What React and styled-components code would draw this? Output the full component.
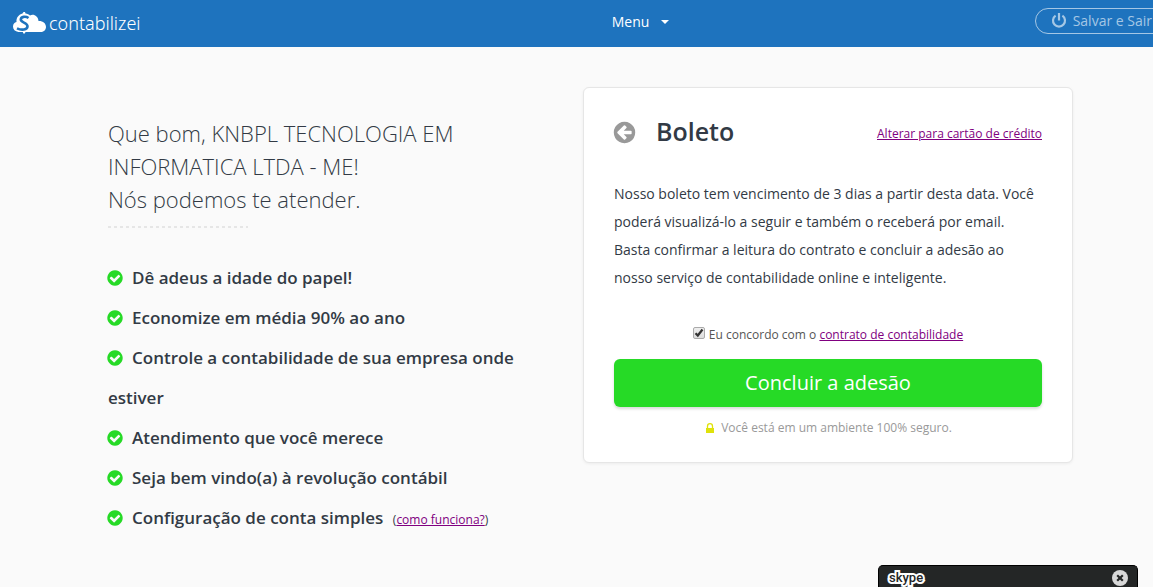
import React from "react";
import styled, { createGlobalStyle } from "styled-components";

const GlobalStyle = createGlobalStyle`
  * { box-sizing: border-box; }
  body {
    margin: 0;
    background: #fafafa;
    color: #323a45;
    font-family: "Open Sans", "Liberation Sans", sans-serif;
    font-size: 14px;
    overflow-x: hidden;
  }
  button { font-family: inherit; cursor: pointer; }
`;

const Header = styled.header`
  display: grid;
  grid-template-columns: 31fr auto 25fr;
  align-items: center;
  height: 47px;
  padding: 0 0 5px 12px;
  overflow: hidden;
  background: #1e73be;
  color: #fff;
`;

const Logo = styled.a`
  display: flex;
  align-items: center;
  gap: 3px;
  padding-top: 4px;
  color: #fff;
  text-decoration: none;
  font-family: "Noto Sans", "Open Sans", sans-serif;
  font-size: 18px;
  font-weight: 300;
  line-height: 24px;
`;

const MenuButton = styled.button`
  display: flex;
  align-items: center;
  gap: 12px;
  padding: 2px 0 0;
  border: 0;
  background: none;
  color: #fff;
  font-size: 14px;
  line-height: 20px;
`;

const Caret = styled.span`
  border: 4px solid transparent;
  border-top-color: #fff;
  border-bottom: 0;
`;

const ExitButton = styled.button`
  display: flex;
  align-items: center;
  justify-self: end;
  gap: 6px;
  height: 26px;
  margin-right: -16px;
  padding: 0 16px 0 15px;
  border: 1px solid #a5c7e5;
  border-radius: 13px;
  background: none;
  color: #a5c7e5;
  font-size: 14px;
  line-height: 20px;
  white-space: nowrap;
`;

const Main = styled.main`
  display: grid;
  grid-template-columns: minmax(0, 475fr) minmax(0, 490fr);
  align-items: start;
  padding: 40px 80px 48px 108px;
`;

const Intro = styled.section`
  padding: 30px 44px 0 0;
`;

const Greeting = styled.h1`
  margin: 0;
  font-size: 22px;
  font-weight: 300;
  line-height: 33px;
`;

const Divider = styled.hr`
  width: 140px;
  height: 2px;
  margin: 10px 0 30px;
  border: 0;
  background: repeating-linear-gradient(90deg, #e6e6e6 0 3px, transparent 3px 6px);
`;

const Benefits = styled.ul`
  margin: 0;
  padding: 0;
  list-style: none;
  font-size: 17px;
  font-weight: 600;
  line-height: 40px;
`;

const CheckMark = styled.svg`
  width: 18px;
  height: 18px;
  margin: 0 8px 0 -2px;
  vertical-align: -3px;
  fill: #26da26;
`;

const Small = styled.small`
  margin-left: 5px;
  font-size: 12px;
  font-weight: 400;
`;

const Link = styled.a`
  color: #800080;
  font-size: 12px;
  text-decoration: underline;
`;

const Card = styled.section`
  padding: 28px 30px 24px;
  border: 1px solid #e6e6e6;
  border-radius: 6px;
  background: #fff;
  box-shadow: 0 1px 3px rgba(0, 0, 0, 0.06);
`;

const CardHeader = styled.header`
  display: flex;
  align-items: center;
  height: 32px;
`;

const BackButton = styled.button`
  display: flex;
  margin: 0 19px 0 -2px;
  padding: 0;
  border: 0;
  background: none;
  color: #999;
`;

const Title = styled.h2`
  flex: 1;
  margin: 0;
  padding-bottom: 2px;
  font-size: 25px;
  font-weight: 600;
  line-height: 32px;
`;

const SwitchMethod = styled.p`
  margin: 0;
  padding-top: 4px;
  font-size: 12px;
  line-height: 16px;
`;

const Description = styled.p`
  margin: 32px 0 33px;
  font-size: 14px;
  line-height: 28px;
`;

const Agreement = styled.div`
  display: flex;
  align-items: center;
  justify-content: center;
  gap: 4px;
  color: #555;
  font-size: 12px;
  line-height: 20px;
`;

const TickBox = styled.span`
  position: relative;
  display: flex;
  margin-bottom: 4px;
`;

const Checkbox = styled.input`
  appearance: none;
  width: 12px;
  height: 12px;
  margin: 0;
  border: 1px solid #aaa;
  border-radius: 2px;
  background: linear-gradient(#eee, #ddd);

  & + svg {
    position: absolute;
    inset: 0;
    visibility: hidden;
    pointer-events: none;
  }
  &:checked + svg { visibility: visible; }
`;

const SubmitButton = styled.button`
  display: block;
  width: 100%;
  height: 48px;
  margin: 14px 0 11px;
  padding: 0 0 2px;
  border: 0;
  border-radius: 6px;
  background: #26da26;
  box-shadow: 0 2px 3px rgba(0, 0, 0, 0.15);
  color: #fff;
  font-size: 20px;
`;

const Security = styled.p`
  display: flex;
  align-items: center;
  justify-content: center;
  gap: 6px;
  margin: 0;
  color: #999;
  font-size: 12px;
  line-height: 20px;
`;

const SkypeBar = styled.aside`
  position: fixed;
  right: 15px;
  bottom: 0;
  display: flex;
  align-items: center;
  justify-content: space-between;
  width: 260px;
  height: 22px;
  padding: 2px 9px 0 10px;
  border: 1px solid #000;
  border-bottom: 0;
  border-radius: 5px 5px 0 0;
  background: #242626;
`;

const SkypeName = styled.span`
  color: #242626;
  font-family: Roboto, "Liberation Sans", sans-serif;
  font-size: 13px;
  font-weight: 500;
  line-height: 18px;
  -webkit-text-stroke: 4px #fff;
  paint-order: stroke fill;
`;

const CloseButton = styled.button`
  display: flex;
  padding: 0;
  border: 0;
  background: none;
`;

const CIRCLE =
  "M1664 896q0 209-103 385.5t-279.5 279.5-385.5 103-385.5-103-279.5-279.5-103-385.5 103-385.5 279.5-279.5 385.5-103 385.5 103 279.5 279.5 103 385.5z";

const CheckIcon = () => (
  <CheckMark viewBox="0 0 1792 1792" aria-hidden="true">
    <path
      fillRule="evenodd"
      d={"M1412 734q0-28-18-46l-91-90q-19-19-45-19t-45 19l-408 407-226-226q-19-19-45-19t-45 19l-91 90q-18 18-18 46 0 27 18 45l362 362q19 19 45 19 27 0 46-19l543-543q18-18 18-45z" + CIRCLE}
    />
  </CheckMark>
);

const BackIcon = () => (
  <svg width="25" height="25" viewBox="0 0 1792 1792" fill="currentColor" aria-hidden="true">
    <path
      fillRule="evenodd"
      d={"M1408 960v-128q0-26-19-45t-45-19h-502l189-189q19-19 19-45t-19-45l-91-91q-18-18-45-18t-45 18l-362 362-91 91q-18 18-18 45t18 45l91 91 362 362q18 18 45 18t45-18l91-91q18-18 18-45t-18-45l-189-189h502q26 0 45-19t19-45z" + CIRCLE}
    />
  </svg>
);

const PowerIcon = () => (
  <svg width="16" height="16" viewBox="0 0 16 16" fill="none" stroke="currentColor" strokeWidth="2.2" aria-hidden="true">
    <path d="M4.600 2.600A6 6 0 1 0 11.400 2.600" />
    <path d="M8 0v7.500" />
  </svg>
);

const LockIcon = () => (
  <svg width="11" height="13" viewBox="0 0 11 13" aria-hidden="true">
    <rect x="2" y="6" width="8" height="5" fill="#dfe20b" />
    <path d="M3.500 6V4.200a2.500 2.500 0 0 1 5 0V6" fill="none" stroke="#dfe20b" strokeWidth="1.300" />
  </svg>
);

const CloudLogo = () => (
  <svg width="34" height="24" viewBox="0 0 34 24" aria-hidden="true">
    <path
      fill="#fff"
      d="M6.500 21C3 20.500 1 18.500 1 15.500C1 13 2.500 11.500 4.500 11C4 6.500 7 3.500 10.500 2.500L11.500 1L13 1L13.500 2.500C15.500 2.700 17 3.500 18 4.500C21.500 2.500 26 5 26.500 10C31 9.800 34 12.500 34 16C34 19 31.500 21 28.500 21H13.500L12.800 22.500H11.300L10.800 21Z"
    />
    <path
      fill="none"
      stroke="#1e73be"
      strokeWidth="2.600"
      d="M16.500 7C14 5.200 8.800 5.300 8.800 8.600C8.800 12 15.500 11.300 15.500 15.300C15.500 19 9.500 19.500 5 17.300"
    />
  </svg>
);

const benefits = [
  "Dê adeus a idade do papel!",
  "Economize em média 90% ao ano",
  "Controle a contabilidade de sua empresa onde estiver",
  "Atendimento que você merece",
  "Seja bem vindo(a) à revolução contábil",
];

export default function App() {
  return (
    <>
      <GlobalStyle />
      <Header>
        <Logo href="#inicio">
          <CloudLogo />
          contabilizei
        </Logo>
        <MenuButton type="button">
          Menu <Caret />
        </MenuButton>
        <ExitButton type="button">
          <PowerIcon />
          Salvar e Sair
        </ExitButton>
      </Header>
      <Main>
        <Intro>
          <Greeting>
            Que bom, KNBPL TECNOLOGIA EM INFORMATICA LTDA - ME!
            <br />
            Nós podemos te atender.
          </Greeting>
          <Divider />
          <Benefits>
            {benefits.map((text) => (
              <li key={text}>
                <CheckIcon />
                {text}
              </li>
            ))}
            <li>
              <CheckIcon />
              Configuração de conta simples{" "}
              <Small>
                (<Link href="#como-funciona">como funciona?</Link>)
              </Small>
            </li>
          </Benefits>
        </Intro>
        <Card>
          <CardHeader>
            <BackButton type="button" aria-label="Voltar">
              <BackIcon />
            </BackButton>
            <Title>Boleto</Title>
            <SwitchMethod>
              <Link href="#cartao">Alterar para cartão de crédito</Link>
            </SwitchMethod>
          </CardHeader>
          <Description>
            Nosso boleto tem vencimento de 3 dias a partir desta data. Você poderá visualizá-lo a
            seguir e também o receberá por email. Basta confirmar a leitura do contrato e concluir a
            adesão ao nosso serviço de contabilidade online e inteligente.
          </Description>
          <Agreement>
            <TickBox>
              <Checkbox type="checkbox" id="agree" defaultChecked />
              <svg width="12" height="12" viewBox="0 0 12 12" fill="none" stroke="#333" strokeWidth="2.200" aria-hidden="true">
                <path d="M2.500 6.200L4.800 8.500L9.500 2.500" />
              </svg>
            </TickBox>
            <label htmlFor="agree">
              Eu concordo com o <Link href="#contrato">contrato de contabilidade</Link>
            </label>
          </Agreement>
          <SubmitButton type="button">Concluir a adesão</SubmitButton>
          <Security>
            <LockIcon />
            Você está em um ambiente 100% seguro.
          </Security>
        </Card>
      </Main>
      <SkypeBar>
        <SkypeName>skype</SkypeName>
        <CloseButton type="button" aria-label="Fechar">
          <svg width="16" height="16" viewBox="0 0 16 16" aria-hidden="true">
            <circle cx="8" cy="8" r="8" fill="#d8d8d8" />
            <path d="M5.200 5.200L10.800 10.800M10.800 5.200L5.200 10.800" stroke="#242626" strokeWidth="2.200" />
          </svg>
        </CloseButton>
      </SkypeBar>
    </>
  );
}
